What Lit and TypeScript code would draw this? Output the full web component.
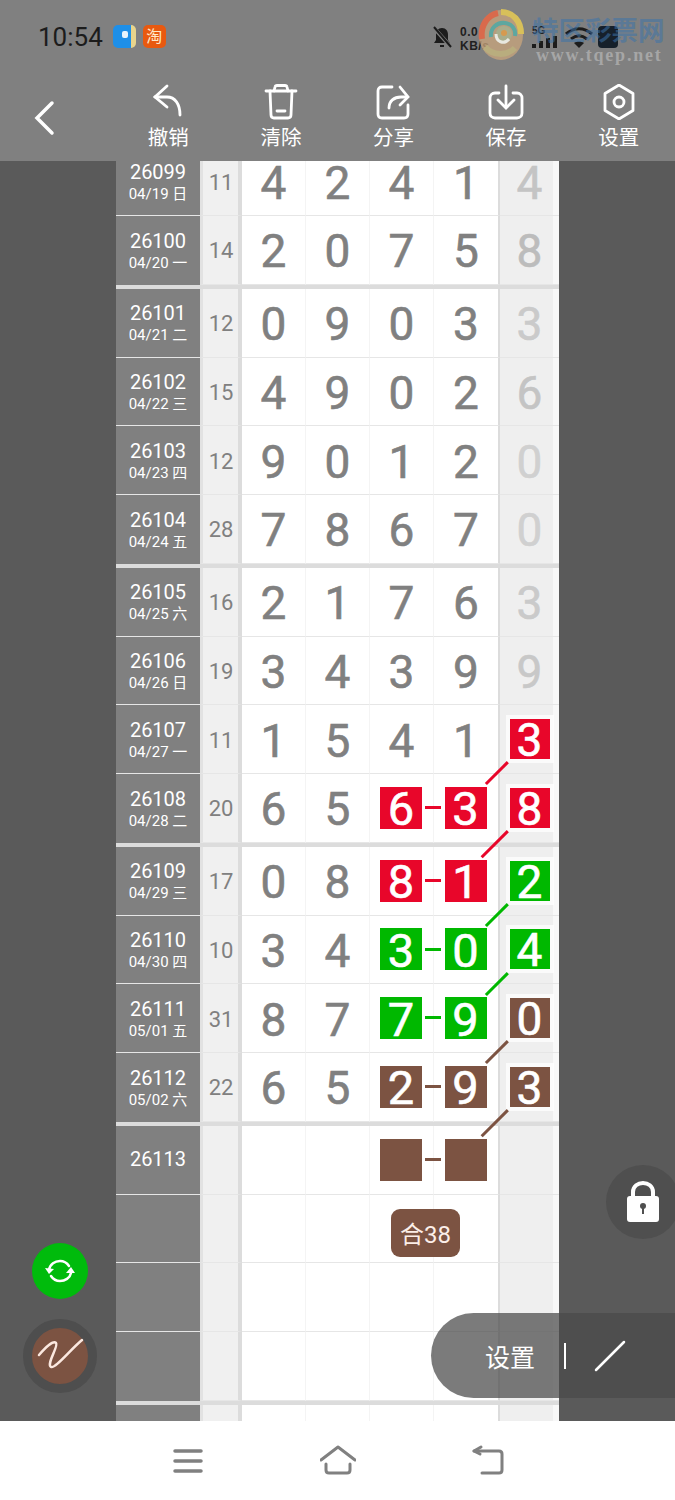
import { LitElement, html, css, nothing, svg } from 'lit';
import { customElement } from 'lit/decorators.js';

type Mark = 'red' | 'green' | 'brown';

interface Row {
  no?: string;
  date?: string;
  sum?: number;
  digits?: string;
  last?: string;
  // boxed cells
  mark?: Mark;
  boxes?: boolean;
  lastMark?: Mark;
  diag?: number;
  badge?: string;
}

const groups: Row[][] = [
  [
    { no: '26099', date: '04/19 日', sum: 11, digits: '4241', last: '4' },
    { no: '26100', date: '04/20 一', sum: 14, digits: '2075', last: '8' },
  ],
  [
    { no: '26101', date: '04/21 二', sum: 12, digits: '0903', last: '3' },
    { no: '26102', date: '04/22 三', sum: 15, digits: '4902', last: '6' },
    { no: '26103', date: '04/23 四', sum: 12, digits: '9012', last: '0' },
    { no: '26104', date: '04/24 五', sum: 28, digits: '7867', last: '0' },
  ],
  [
    { no: '26105', date: '04/25 六', sum: 16, digits: '2176', last: '3' },
    { no: '26106', date: '04/26 日', sum: 19, digits: '3439', last: '9' },
    { no: '26107', date: '04/27 一', sum: 11, digits: '1541', last: '3', lastMark: 'red', diag: 31 },
    { no: '26108', date: '04/28 二', sum: 20, digits: '6563', last: '8', mark: 'red', boxes: true, lastMark: 'red', diag: 37 },
  ],
  [
    { no: '26109', date: '04/29 三', sum: 17, digits: '0881', last: '2', mark: 'red', boxes: true, lastMark: 'green', diag: 31 },
    { no: '26110', date: '04/30 四', sum: 10, digits: '3430', last: '4', mark: 'green', boxes: true, lastMark: 'green', diag: 31 },
    { no: '26111', date: '05/01 五', sum: 31, digits: '8779', last: '0', mark: 'green', boxes: true, lastMark: 'brown', diag: 31 },
    { no: '26112', date: '05/02 六', sum: 22, digits: '6529', last: '3', mark: 'brown', boxes: true, lastMark: 'brown', diag: 37 },
  ],
  [
    { no: '26113', mark: 'brown', boxes: true, digits: '    ' },
    { badge: '合38' },
    {},
    {},
  ],
  [{}],
];

const lastShade: Record<string, string> = {
  '4': '#c4c4c4',
  '8': '#bcbcbc',
  '3': '#cacaca',
  '6': '#c4c4c4',
  '0': '#d0d0d0',
  '9': '#c8c8c8',
};

const tools = [
  {
    label: '撤销',
    icon: svg`<path d="M17 2 5 13l12 10"/><path d="M5 13h12c8 0 13 7 13 18"/>`,
  },
  {
    label: '清除',
    icon: svg`<path d="M3 7h30"/><path d="M11 7l1-4c.2-1 1-1.5 2-1.5h8c1 0 1.800.5 2 1.500l1 4"/><path d="M7 7l1 24c.1 2 1.500 3 3 3h14c1.500 0 2.900-1 3-3l1-24"/><path d="M14 27h8"/>`,
  },
  {
    label: '分享',
    icon: svg`<path d="M17 3H7C4.500 3 3 4.500 3 7v23c0 2.500 1.500 4 4 4h22c2.500 0 4-1.500 4-4V21"/><path d="M14 24c0-7 5-11 12-11h6"/><path d="M25 3l8 10-8 8"/>`,
  },
  {
    label: '保存',
    icon: svg`<path d="M11 9H7c-3 0-5 2-5 5v15c0 3 2 5 5 5h22c3 0 5-2 5-5V14c0-3-2-5-5-5h-4"/><path d="M18 2v21"/><path d="M10 16l8 8 8-8"/>`,
  },
  {
    label: '设置',
    icon: svg`<path d="M18 1 32 9.500v17L18 35 4 26.500v-17z" stroke-linejoin="round"/><circle cx="18" cy="18" r="5"/>`,
  },
];

@customElement('app-root')
export class AppRoot extends LitElement {
  static styles = css`
    :host {
      display: block;
      position: relative;
      width: 675px;
      height: 1500px;
      overflow: hidden;
      font-family: Roboto, 'Noto Sans CJK SC', sans-serif;
      background: #fff;
    }

    .header {
      height: 161px;
      box-sizing: border-box;
      background: #808080;
      position: relative;
    }

    .status {
      height: 76px;
      box-sizing: border-box;
      padding: 25px 0 0 38px;
      display: flex;
      align-items: flex-start;
      position: relative;
    }
    .time {
      font-size: 26px;
      line-height: 24px;
      color: #1c1c1c;
      margin-right: 10px;
    }
    .app-icon {
      width: 23px;
      height: 23px;
      border-radius: 5px;
      margin-right: 7px;
    }
    .app-blue {
      background: linear-gradient(to right, #1e8fe8 0 78%, #e8d48c 78%);
      position: relative;
    }
    .app-blue::after {
      content: '';
      position: absolute;
      left: 9px;
      top: 6px;
      width: 6px;
      height: 7px;
      border-radius: 2px;
      background: #e8f4fc;
    }
    .app-orange {
      background: #e8590f;
      color: #ffe8c8;
      font-size: 16px;
      line-height: 23px;
      text-align: center;
    }
    .stat {
      position: absolute;
      color: #202020;
      font-family: 'Liberation Sans', sans-serif;
      font-weight: 700;
    }
    .stat-speed {
      left: 460px;
      top: 25px;
      font-size: 12px;
      line-height: 14px;
      letter-spacing: 0.5px;
    }
    .stat-5g {
      left: 532px;
      top: 25px;
      font-size: 10px;
      line-height: 12px;
    }
    .status svg {
      position: absolute;
    }
    .mark-cn {
      position: absolute;
      left: 532px;
      top: 14px;
      font-family: 'Noto Sans CJK SC', sans-serif;
      font-size: 26.500px;
      line-height: 30px;
      font-weight: 700;
      color: rgba(60, 115, 170, 0.55);
      white-space: nowrap;
    }
    .mark-url {
      position: absolute;
      left: 536px;
      top: 45px;
      font-family: 'Liberation Serif', serif;
      font-size: 18px;
      line-height: 20px;
      font-weight: 700;
      letter-spacing: 1.800px;
      color: rgba(205, 205, 205, 0.5);
      white-space: nowrap;
    }

    .toolbar {
      display: flex;
      padding-top: 8px;
    }
    .back {
      width: 112px;
      box-sizing: border-box;
      padding: 16px 0 0 33px;
    }
    .back svg,
    .tool svg {
      display: block;
      fill: none;
      stroke: #fff;
      stroke-width: 2.800;
      stroke-linecap: round;
    }
    .tool {
      flex: 1;
      display: flex;
      flex-direction: column;
      align-items: center;
      color: #fff;
      font-size: 20.500px;
      line-height: 28px;
    }
    .tool span {
      margin-top: 4px;
    }

    .board {
      height: 1260px;
      overflow: hidden;
      background: #5a5a5a;
      position: relative;
    }
    .table {
      width: 443px;
      margin: -13.750px 0 0 116px;
      display: flex;
      flex-direction: column;
      gap: 4px;
      background: #dcdcdc;
    }
    .group {
      display: flex;
      flex-direction: column;
    }
    .row {
      height: 68.750px;
      display: grid;
      grid-template-columns: 84px 42px 64px 64px 64px 66px 59px;
      background: #fff;
    }
    .issue {
      background: #808080;
      color: #fff;
      display: flex;
      flex-direction: column;
      align-items: center;
      justify-content: center;
      border-bottom: 1.500px solid #e6e6e6;
      box-sizing: border-box;
    }
    .group .row:last-child .issue {
      border-bottom: none;
    }
    .no {
      font-size: 20px;
      line-height: 25px;
    }
    .date {
      font-size: 15px;
      line-height: 18px;
      white-space: nowrap;
    }
    .sum {
      background: #f0f0f0;
      border-left: 3px solid #e2e2e2;
      border-right: 4px solid #dcdcdc;
      border-bottom: 1px solid #e6e6e6;
      color: #808080;
      font-size: 22px;
      padding: 2px 0 0 1px;
      display: flex;
      align-items: center;
      justify-content: center;
    }
    .cell {
      position: relative;
      box-sizing: border-box;
      padding-top: 3px;
      display: flex;
      align-items: center;
      justify-content: center;
      color: #808080;
      font-size: 46px;
      -webkit-text-stroke: 0.6px currentColor;
      border-right: 1px solid #f4f4f4;
      border-bottom: 1px solid #e6e6e6;
    }
    .cell.wide {
      border-right: 2px solid #dcdcdc;
    }
    .cell.end {
      border-right: none;
      background: linear-gradient(to right, #efefef 53px, #f8f8f8 53px);
    }
    .box {
      width: 42px;
      height: 42px;
      margin: -3px 0 0 -1px;
      box-sizing: border-box;
      padding-top: 2px;
      display: flex;
      align-items: center;
      justify-content: center;
      color: #fff;
      font-size: 47px;
      box-shadow: 0 0 0 4px rgba(255, 255, 255, 0.75);
    }
    .box.small {
      width: 40px;
      height: 40px;
      margin-left: 0;
      font-size: 46px;
    }
    .red {
      background: #e8062a;
    }
    .green {
      background: #00b800;
    }
    .brown {
      background: #7c5342;
    }
    .dash {
      position: absolute;
      left: -9px;
      top: 32px;
      width: 16px;
      height: 3px;
      z-index: 2;
    }
    .diag {
      position: absolute;
      left: 8px;
      top: 56px;
      height: 2.500px;
      transform-origin: 0 50%;
      transform: rotate(135deg);
      z-index: 2;
    }
    .badge {
      position: absolute;
      left: 21px;
      top: 14px;
      width: 69px;
      height: 48px;
      border-radius: 9px;
      background: #7c5342;
      color: #fbeee8;
      font-size: 24px;
      -webkit-text-stroke: 0;
      display: flex;
      align-items: center;
      justify-content: center;
      z-index: 2;
    }

    .float {
      position: absolute;
      border-radius: 50%;
      display: flex;
      align-items: center;
      justify-content: center;
    }
    .sync {
      left: 32px;
      top: 1082px;
      width: 56px;
      height: 56px;
      background: #00bb0c;
    }
    .pen {
      left: 23px;
      top: 1158px;
      width: 56px;
      height: 56px;
      border: 9px solid #4e4e4e;
      background: #7c5342;
    }
    .lock {
      left: 606px;
      top: 1004px;
      width: 74px;
      height: 74px;
      background: #4f4f4f;
    }
    .pill {
      position: absolute;
      left: 431px;
      top: 1152px;
      width: 244px;
      height: 85px;
      box-sizing: border-box;
      padding-left: 54px;
      border-radius: 42.500px 0 0 42.500px;
      background: rgba(74, 74, 74, 0.73);
      color: #fff;
      font-size: 25px;
      display: flex;
      align-items: center;
    }
    .pill i {
      width: 2px;
      height: 26px;
      background: #fff;
      margin: 0 0 0 29px;
    }
    .pill svg {
      margin-left: 28px;
    }

    .nav {
      height: 79px;
      background: #fff;
      display: flex;
      align-items: center;
      justify-content: center;
      gap: 114px;
    }
    .nav svg {
      display: block;
      fill: none;
      stroke: #808080;
      stroke-width: 3.500;
      stroke-linecap: round;
      stroke-linejoin: round;
    }
  `;

  private _status() {
    return html`
      <div class="status">
        <span class="time">10:54</span>
        <div class="app-icon app-blue"></div>
        <div class="app-icon app-orange">淘</div>
        <svg style="left:432px;top:26px" width="21" height="23" viewBox="0 0 21 23">
          <path d="M10 2c-4 0-6 3-6 7v5l-2 3h16l-2-3V9c0-4-2-7-6-7z" fill="#1c1c1c"/>
          <path d="M8 19h4v2H8z" fill="#1c1c1c"/>
          <path d="M2 2l17 19" stroke="#808080" stroke-width="4"/>
          <path d="M2 1l17 20" stroke="#1c1c1c" stroke-width="2"/>
        </svg>
        <span class="stat stat-speed">0.0<br />KB/s</span>
        <span class="stat stat-5g">5G</span>
        <svg style="left:532px;top:36px" width="28" height="12" viewBox="0 0 28 12" fill="#1c1c1c">
          <rect x="0" y="8" width="4" height="4"/><rect x="7" y="5" width="4" height="7"/>
          <rect x="14" y="2" width="4" height="10"/><rect x="21" y="0" width="4" height="12"/>
        </svg>
        <svg style="left:564px;top:26px" width="30" height="23" viewBox="0 0 30 23" fill="none" stroke="#1c1c1c" stroke-width="3">
          <path d="M2 8c8-7 18-7 26 0"/><path d="M7 13c5-4 11-4 16 0"/>
          <path d="M15 22l-5-5c3-2 7-2 10 0z" fill="#1c1c1c" stroke="none"/>
        </svg>
        <svg style="left:598px;top:26px" width="21" height="23" viewBox="0 0 21 23">
          <rect x="0" y="0" width="20" height="22" rx="4" fill="#16202a"/>
        </svg>
        <span class="mark-cn">特区彩票网</span>
        <span class="mark-url">www.tqep.net</span>
        <svg style="left:478px;top:9px" width="48" height="52" viewBox="0 0 48 52" fill="none">
          <ellipse cx="23" cy="26" rx="22" ry="25" fill="#c9a67c" opacity=".75"/>
          <path d="M23 3c12 0 20 9 20 22" stroke="#d8c05a" stroke-width="6"/>
          <path d="M4 30C2 16 10 6 20 4" stroke="#d96a4c" stroke-width="6"/>
          <path d="M7 38c8 9 22 9 30 1" stroke="#b9ad7e" stroke-width="6"/>
          <path d="M13 28c-1-9 6-15 14-14 7 1 11 6 10 13" stroke="#5da7a0" stroke-width="4"/>
          <circle cx="26" cy="25" r="8" fill="#a8ad8c"/>
          <circle cx="26" cy="24" r="3" fill="#d69a50"/>
          <path d="M31 30c-5 6-13 3-13-5" stroke="#e8e8e0" stroke-width="3"/>
        </svg>
      </div>
    `;
  }

  private _toolbar() {
    return html`
      <div class="toolbar">
        <div class="back">
          <svg width="22" height="36" viewBox="0 0 22 36" style="stroke-width:3.500">
            <path d="M19 3 4 18l15 15"/>
          </svg>
        </div>
        ${tools.map(
          (t) => html`
            <div class="tool">
              <svg width="36" height="36" viewBox="0 0 36 36">${t.icon}</svg>
              <span>${t.label}</span>
            </div>
          `
        )}
      </div>
    `;
  }

  private _cell(r: Row, i: number) {
    const ch = r.digits ? r.digits[i] : '';
    const boxed = r.boxes && i >= 2;
    return html`
      <div class="cell ${i === 3 ? 'wide' : ''}">
        ${boxed
          ? html`<div class="box ${r.mark}">${ch.trim()}</div>`
          : ch}
        ${boxed && i === 3 ? html`<div class="dash ${r.mark}"></div>` : nothing}
        ${r.badge && i === 2 ? html`<div class="badge">${r.badge}</div>` : nothing}
      </div>
    `;
  }

  private _row(r: Row) {
    return html`
      <div class="row">
        <div class="issue">
          ${r.no ? html`<span class="no">${r.no}</span>` : nothing}
          ${r.date ? html`<span class="date">${r.date}</span>` : nothing}
        </div>
        <div class="sum">${r.sum ?? ''}</div>
        ${[0, 1, 2, 3].map((i) => this._cell(r, i))}
        <div class="cell end" style=${r.last && !r.lastMark ? `color:${lastShade[r.last]}` : ''}>
          ${r.lastMark
            ? html`<div class="box small ${r.lastMark}">${r.last}</div>`
            : r.last ?? ''}
          ${r.diag
            ? html`<div class="diag ${r.lastMark}" style="width:${r.diag}px"></div>`
            : nothing}
        </div>
      </div>
    `;
  }

  render() {
    return html`
      <div class="header">${this._status()} ${this._toolbar()}</div>
      <div class="board">
        <div class="table">
          ${groups.map((g) => html`<div class="group">${g.map((r) => this._row(r))}</div>`)}
        </div>
        <div class="float sync">
          <svg width="36" height="36" viewBox="0 0 36 36" fill="none" stroke="#fff" stroke-width="2.500" stroke-linecap="round">
            <path d="M7 17c1-6 6-9 11-9 4 0 7 2 9 5"/>
            <path d="M29 20c-1 5-6 8-11 8-4 0-7-2-9-5"/>
            <path d="M3 15l4 6 5-5z" fill="#fff" stroke="none"/>
            <path d="M24 20l5-6 4 6z" fill="#fff" stroke="none"/>
          </svg>
        </div>
        <div class="float pen">
          <svg width="56" height="56" viewBox="0 0 56 56" fill="none" stroke="#fbe8df" stroke-width="2.500" stroke-linecap="round">
            <path d="M7 27c6-7 14-15 17-12 3 3-10 21-5 24 4 2 19-17 31-27"/>
          </svg>
        </div>
        <div class="float lock">
          <svg width="36" height="44" viewBox="0 0 36 44">
            <path d="M8 20v-8c0-12 20-12 20 0v8" fill="none" stroke="#fff" stroke-width="4"/>
            <rect x="2" y="16" width="32" height="26" rx="3" fill="#fff"/>
            <circle cx="18" cy="26" r="3" fill="#4f4f4f"/>
            <rect x="17" y="27" width="2" height="7" fill="#4f4f4f"/>
          </svg>
        </div>
        <div class="pill">
          设置
          <i></i>
          <svg width="32" height="32" viewBox="0 0 32 32" fill="none" stroke="#fff" stroke-width="2.500" stroke-linecap="round">
            <path d="M2 30 30 2"/>
          </svg>
        </div>
      </div>
      <div class="nav">
        <svg width="36" height="36" viewBox="0 0 36 36">
          <path d="M5 8h26M5 18h26M5 28h26"/>
        </svg>
        <svg width="36" height="36" viewBox="0 0 36 36" style="stroke-width:3">
          <path d="M1 17 18 4l17 13"/><path d="M6 21v6c0 2 1 3 3 3h18c2 0 3-1 3-3v-6"/>
        </svg>
        <svg width="36" height="36" viewBox="0 0 36 36" style="stroke-width:3">
          <path d="M4 8h25c2 0 3 1 3 3v16c0 2-1 3-3 3H12"/><path d="M11 4 4 8l6 3"/>
        </svg>
      </div>
    `;
  }
}
